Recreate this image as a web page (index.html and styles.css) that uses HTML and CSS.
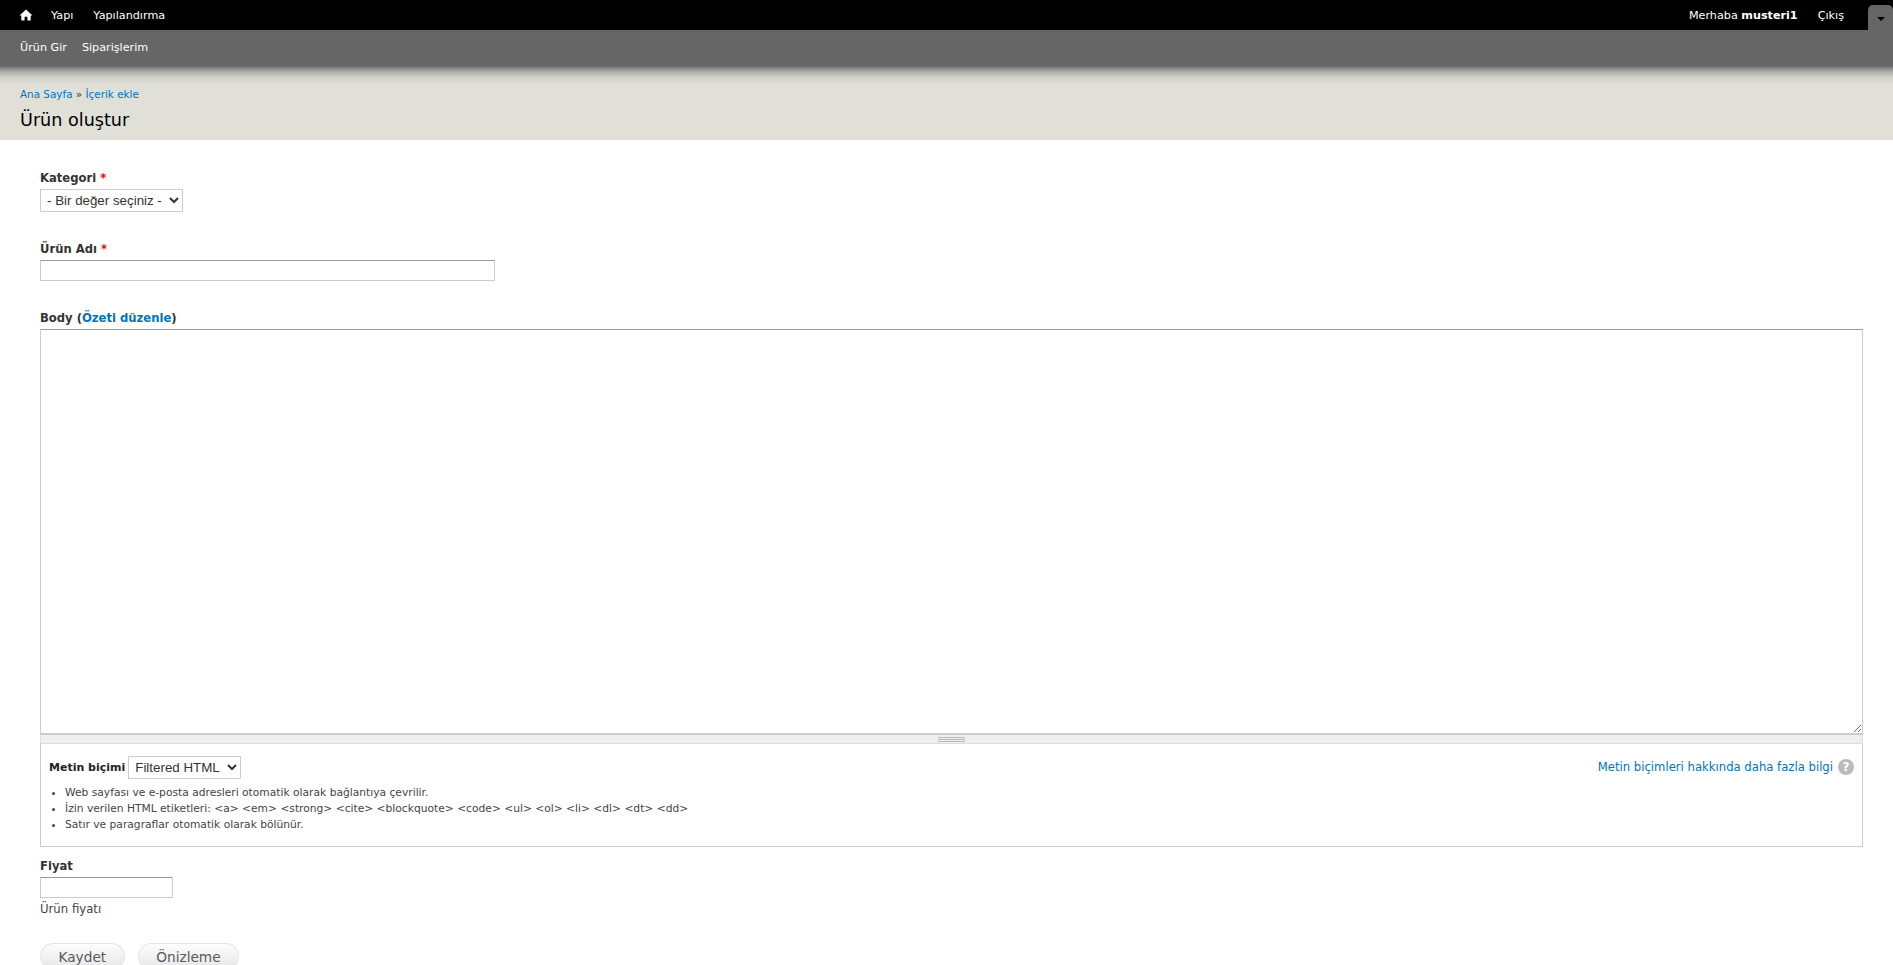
FILE: index.html
```html
<!DOCTYPE html>
<html lang="tr">
<head>
    <meta charset="UTF-8">
    <meta name="viewport" content="width=device-width, initial-scale=1.0">
    <title>Ürün oluştur</title>
    <link rel="stylesheet" href="styles.css">
</head>
<body>
    <div class="toolbar-menu">
        <ul class="toolbar-links">
            <li>
                <a href="#" class="home-link" aria-label="Ana Sayfa">
                    <svg width="14" height="12" viewBox="0 0 14 12"><path d="M7 0.5 L0.5 6.6 L2.3 6.6 L2.3 11.5 L5.6 11.5 L5.6 7.8 L8.4 7.8 L8.4 11.5 L11.7 11.5 L11.7 6.6 L13.5 6.6 Z" fill="#fff"/></svg>
                </a>
            </li>
            <li><a href="#">Yapı</a></li>
            <li><a href="#">Yapılandırma</a></li>
        </ul>
        <div class="toolbar-user">
            <span>Merhaba <strong>musteri1</strong></span>
            <a href="#">Çıkış</a>
        </div>
        <div class="toolbar-toggle"><span class="toggle-arrow"></span></div>
    </div>
    <div class="toolbar-shortcuts">
        <a href="#">Ürün Gir</a>
        <a href="#">Siparişlerim</a>
    </div>

    <div class="page-header">
        <div class="breadcrumb"><a href="#">Ana Sayfa</a> » <a href="#">İçerik ekle</a></div>
        <h1>Ürün oluştur</h1>
    </div>

    <form class="content">
        <div class="form-item item-category">
            <label for="category">Kategori <span class="required">*</span></label>
            <select id="category" class="form-select category-select">
                <option>- Bir değer seçiniz -</option>
            </select>
        </div>

        <div class="form-item item-title">
            <label for="title">Ürün Adı <span class="required">*</span></label>
            <input type="text" id="title" class="form-text title-input">
        </div>

        <div class="form-item item-body">
            <label for="body">Body (<a href="#">Özeti düzenle</a>)</label>
            <textarea id="body" class="body-text"></textarea>
            <div class="grippie"><span class="grip-lines"></span></div>
            <div class="filter-wrapper">
                <div class="filter-top">
                    <div class="filter-select">
                        <label for="format">Metin biçimi</label>
                        <select id="format" class="form-select format-select">
                            <option>Filtered HTML</option>
                        </select>
                    </div>
                    <a href="#" class="filter-help">Metin biçimleri hakkında daha fazla bilgi <span class="help-icon">?</span></a>
                </div>
                <ul class="filter-tips">
                    <li>Web sayfası ve e-posta adresleri otomatik olarak bağlantıya çevrilir.</li>
                    <li>İzin verilen HTML etiketleri: &lt;a&gt; &lt;em&gt; &lt;strong&gt; &lt;cite&gt; &lt;blockquote&gt; &lt;code&gt; &lt;ul&gt; &lt;ol&gt; &lt;li&gt; &lt;dl&gt; &lt;dt&gt; &lt;dd&gt;</li>
                    <li>Satır ve paragraflar otomatik olarak bölünür.</li>
                </ul>
            </div>
        </div>

        <div class="form-item item-price">
            <label for="price">Fiyat</label>
            <input type="text" id="price" class="form-text price-input">
            <div class="description">Ürün fiyatı</div>
        </div>

        <div class="form-actions">
            <button type="button" class="button">Kaydet</button>
            <button type="button" class="button">Önizleme</button>
        </div>
    </form>
</body>
</html>
```

FILE: styles.css
```css
html, body {
    height: 965px;
    overflow: hidden;
}

body {
    margin: 0;
    font-family: "DejaVu Sans", Verdana, sans-serif;
    font-size: 12px;
    color: #333;
    background-color: #fff;
}

a {
    color: #0074bd;
    text-decoration: none;
}

ul {
    margin: 0;
    padding: 0;
}

/* toolbar */
.toolbar-menu {
    display: flex;
    align-items: center;
    height: 30px;
    padding-left: 19px;
    background-color: #000;
    color: #fff;
    font-size: 11.2px;
}

.toolbar-menu a {
    color: #fff;
}

.toolbar-links {
    display: flex;
    align-items: center;
    gap: 20px;
    list-style: none;
    flex: 1;
}

.toolbar-links li {
    display: flex;
}

.home-link {
    display: flex;
    margin-right: -2px;
}

.toolbar-user {
    display: flex;
    gap: 20px;
    margin-right: 24px;
}

.toolbar-toggle {
    display: flex;
    justify-content: center;
    align-items: center;
    width: 25px;
    height: 25px;
    margin-top: 5px;
    background-color: #666;
    border-radius: 5px 5px 0 0;
}

.toggle-arrow {
    width: 0;
    height: 0;
    margin-top: 2px;
    border-left: 4px solid transparent;
    border-right: 4px solid transparent;
    border-top: 4px solid #000;
}

.toolbar-shortcuts {
    display: flex;
    align-items: center;
    gap: 15px;
    height: 35px;
    padding-left: 20px;
    background-color: #666;
    font-size: 11.2px;
}

.toolbar-shortcuts a {
    color: #fff;
}

/* header */
.page-header {
    height: 75px;
    padding: 22px 20px 0;
    box-sizing: border-box;
    background: linear-gradient(#5f5f5c 0, #a8a8a3 6px, #d0d0c9 12px, #e0e0d8 20px);
}

.breadcrumb {
    font-size: 10.4px;
    line-height: 14px;
    color: #333;
}

h1 {
    margin: 7px 0 0;
    font-size: 17.6px;
    font-weight: normal;
    line-height: 24px;
    color: #000;
}

/* form */
.content {
    padding: 0 30px 0 40px;
}

.form-item label {
    display: block;
    font-weight: bold;
    font-size: 11.6px;
    line-height: 15px;
    margin-bottom: 3px;
}

.form-item label a {
    color: #0074bd;
}

.required {
    color: #f00;
}

.form-select {
    font-family: "Liberation Sans", Arial, sans-serif;
    font-size: 13.33px;
    color: #333;
    background-color: #fff;
    border: 1px solid #ccc;
    padding: 2px 0 2px 2px;
    height: 23px;
}

.category-select {
    width: 143px;
}

.format-select {
    width: 113px;
}

.form-text {
    display: block;
    box-sizing: border-box;
    height: 21px;
    border: 1px solid #ccc;
    border-top-color: #999;
    padding: 2px;
    background-color: #fff;
}

.item-category {
    padding-top: 31px;
}

.item-title {
    padding-top: 30px;
}

.title-input {
    width: 455px;
}

.item-body {
    padding-top: 30px;
}

.body-text {
    display: block;
    box-sizing: border-box;
    width: 100%;
    height: 405px;
    margin: 0;
    border: 1px solid #ccc;
    border-top-color: #999;
    padding: 2px;
    resize: both;
}

.grippie {
    display: flex;
    justify-content: center;
    align-items: center;
    box-sizing: border-box;
    height: 10px;
    background-color: #eee;
    border: 1px solid #ddd;
    border-top-color: #ccc;
}

.grip-lines {
    width: 27px;
    box-sizing: content-box;
    height: 3px;
    border-top: 1px solid #bbb;
    border-bottom: 1px solid #bbb;
    background: linear-gradient(#eee 0, #eee 1px, #bbb 1px, #bbb 2px, #eee 2px);
}

.filter-wrapper {
    box-sizing: border-box;
    height: 103px;
    padding: 12px 8px 0;
    border: 1px solid #ccc;
    border-top: none;
}

.filter-top {
    display: flex;
    justify-content: space-between;
    align-items: center;
}

.filter-select {
    display: flex;
    align-items: center;
    gap: 3px;
}

.filter-select label {
    font-size: 11px;
    margin: 0;
    color: #222;
}

.filter-help {
    display: flex;
    align-items: center;
    gap: 5px;
    margin-bottom: 2px;
    font-size: 11.65px;
}

.help-icon {
    display: inline-block;
    width: 16px;
    height: 16px;
    border-radius: 50%;
    background-color: #bbb;
    color: #fff;
    font-size: 12px;
    font-weight: bold;
    line-height: 16px;
    text-align: center;
}

.filter-tips {
    margin-top: 6px;
    padding-left: 16px;
    font-size: 10.7px;
    line-height: 16px;
    color: #444;
}

.item-price {
    padding-top: 12px;
}

.price-input {
    width: 133px;
}

.description {
    margin-top: 4px;
    font-size: 11.7px;
    line-height: 14px;
    color: #444;
}

.form-actions {
    display: flex;
    gap: 13px;
    padding-top: 27px;
}

.button {
    height: 27px;
    padding: 0 17.5px;
    border: 1px solid #e4e4e4;
    border-bottom-color: #b4b4b4;
    border-radius: 15px;
    background: linear-gradient(#fdfdfd, #e6e6e6);
    font-family: "DejaVu Sans", Verdana, sans-serif;
    font-size: 13.7px;
    color: #5a5a5a;
}
```
